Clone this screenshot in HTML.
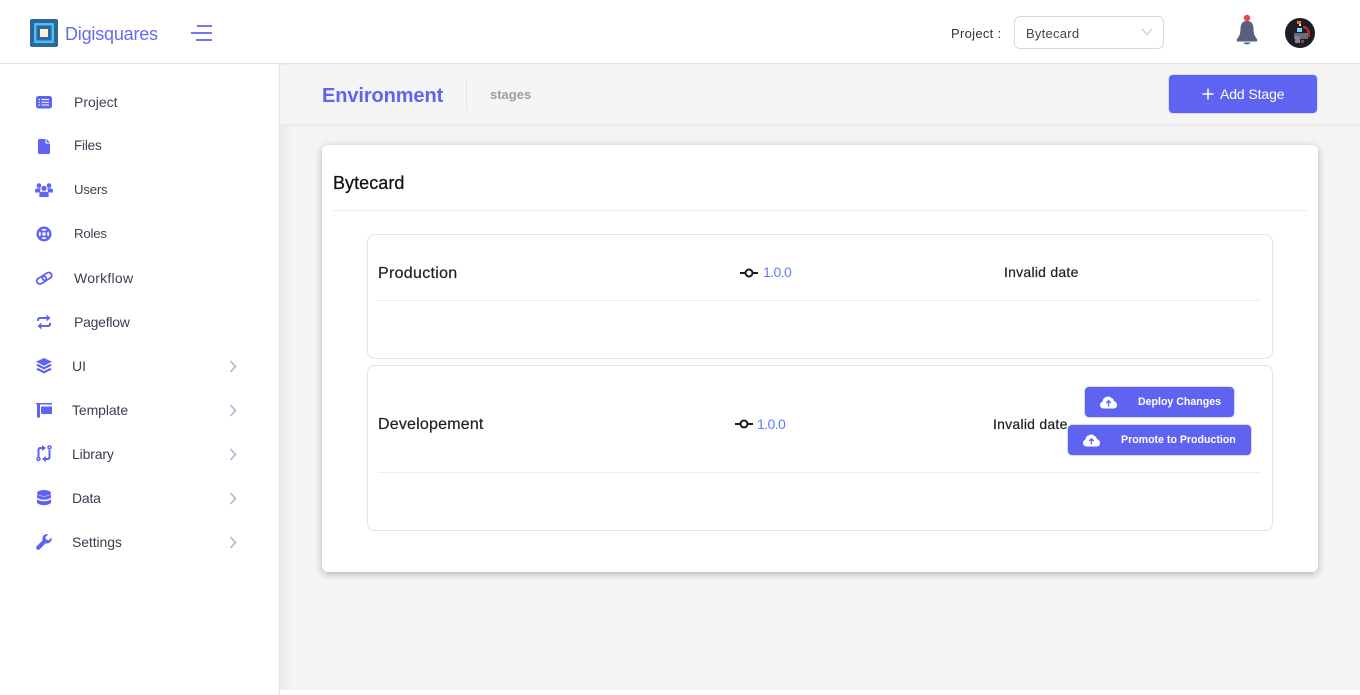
<!DOCTYPE html>
<html><head><meta charset="utf-8"><style>
html,body{margin:0;padding:0}
body{width:1360px;height:695px;overflow:hidden;background:#fff;position:relative;font-family:"Liberation Sans",sans-serif;color:#272b41}
div,span,svg{position:absolute;box-sizing:border-box}
.t{white-space:nowrap;line-height:20px;height:20px}
.m{font-size:14px;color:#3b3f50;left:74px}
.m2{left:72px}
.b{background:#5f63f2;border:1px solid #d9dbf5;border-radius:5px}
.w{color:#fff;font-weight:bold;font-size:10.600px;letter-spacing:0}
</style></head><body>
<div style="left:280px;top:64px;width:1080px;height:626px;background:#f4f4f4"></div>
<div style="left:280px;top:64px;width:12px;height:626px;background:linear-gradient(90deg,#e9e9e9,#f4f4f4)"></div>
<div style="left:280px;top:65px;width:1080px;height:60px;background:#f5f5f6;border-bottom:1px solid #e9e9e9;box-shadow:0 1px 2px rgba(0,0,0,.02)"></div>
<div style="left:0;top:64px;width:280px;height:631px;background:#fff;border-right:1px solid #e2e2e2"></div>
<div style="left:0;top:0;width:1360px;height:64px;background:#fff;border-bottom:1px solid #e4e4e4"></div>

<svg style="left:30px;top:19px" width="28" height="28"><rect width="28" height="28" rx="2" fill="#2f679b"/><rect x="4" y="4" width="20" height="20" fill="#4cbdf6"/><rect x="6.500" y="6.500" width="15" height="15" fill="#2f679b"/><rect x="10" y="10" width="8" height="8" fill="#f8efdf"/></svg>
<div class="t" style="left:65px;top:24px;font-size:18px;color:#666bf2;letter-spacing:-.2px">Digisquares</div>
<svg style="left:191px;top:25px" width="21" height="16"><path d="M6.500 1H20.500M.5 8H20.500M5.500 15H20.500" stroke="#5f63f2" stroke-width="1.700" stroke-linecap="round"/></svg>

<div class="t" style="left:951px;top:24px;font-size:13px;color:#333;letter-spacing:.3px">Project :</div>
<div style="left:1014px;top:16px;width:150px;height:33px;border:1px solid #d9d9d9;border-radius:6px;background:#fff"></div>
<div class="t" style="left:1026px;top:24px;font-size:13px;color:#444;letter-spacing:.25px">Bytecard</div>
<svg style="left:1141px;top:28px" width="12" height="8"><path d="M1 1L6 6.500L11 1" fill="none" stroke="#c2c2c2" stroke-width="1"/></svg>
<svg style="left:1236px;top:14px" width="22" height="32"><circle cx="11" cy="4" r="3.200" fill="#ee4451"/><path d="M11 7C6 7 4.500 10.500 4.500 15C4.500 20 3 23 .8 25V27.500H21.200V25C19 23 17.500 20 17.500 15C17.500 10.500 16 7 11 7Z" fill="#5a5f7d"/><path d="M7.500 28.500H14.500C14 31 8 31 7.500 28.500Z" fill="#5a5f7d"/></svg>
<svg style="left:1285px;top:18px" width="30" height="30"><circle cx="15" cy="15" r="15" fill="#1d1f27"/><rect x="12" y="3" width="4" height="3" fill="#e8742c"/><rect x="14" y="6" width="2" height="2" fill="#f4e2c8"/><path d="M18 8H21L25 13V19H22V12L18 10Z" fill="#c12a22"/><rect x="12" y="10" width="5" height="4" fill="#78d6e6"/><rect x="9" y="15" width="14" height="6" fill="#6a6d75"/><rect x="10" y="18" width="5" height="7" fill="#7a8a90"/><rect x="16" y="22" width="3" height="3" fill="#a33"/></svg>

<!-- sidebar -->
<svg style="left:36px;top:96px" width="16" height="13"><rect width="16" height="12.500" rx="2.500" fill="#5f63f2"/><path d="M5.500 3.500H13M5.500 6.250H13M5.500 9H13M2.500 3.500H4M2.500 6.250H4M2.500 9H4" stroke="#fff" stroke-width="1.100"/></svg>
<div class="t m" style="top:92px">Project</div>
<svg style="left:38px;top:139px" width="12" height="15"><path d="M1.500 0H7.500V4.500H12V13.500Q12 15 10.500 15H1.500Q0 15 0 13.500V1.500Q0 0 1.500 0ZM8.500 0L12 3.500H8.500Z" fill="#5f63f2"/></svg>
<div class="t m" style="top:136px;letter-spacing:-.2px;font-size:13.500px">Files</div>
<svg style="left:35px;top:183px" width="18" height="14"><circle cx="4" cy="2.600" r="2.300" fill="#5f63f2"/><circle cx="14" cy="2.600" r="2.300" fill="#5f63f2"/><circle cx="9" cy="5.300" r="2.600" fill="#5f63f2"/><path d="M0 8.500Q0 5.300 2.500 5.300H5.500L5 9.500H0ZM18 8.500Q18 5.300 15.500 5.300H12.500L13 9.500H18ZM4.300 11.500Q4.300 8.800 7 8.800H11Q13.700 8.800 13.700 11.500V14H4.300Z" fill="#5f63f2"/></svg>
<div class="t m" style="top:180px;letter-spacing:-.2px;font-size:13.200px">Users</div>
<svg style="left:36px;top:226px" width="16" height="16"><circle cx="8" cy="8" r="6.300" fill="none" stroke="#5f63f2" stroke-width="2.400"/><circle cx="8" cy="8" r="2.600" fill="none" stroke="#5f63f2" stroke-width="1.600"/><path d="M3.500 3.500L6 6M12.500 3.500L10 6M3.500 12.500L6 10M12.500 12.500L10 10" stroke="#5f63f2" stroke-width="2.400"/></svg>
<div class="t m" style="top:224px;letter-spacing:-.2px;font-size:13.200px">Roles</div>
<svg style="left:36px;top:270px" width="17" height="16"><g fill="none" stroke="#5f63f2" stroke-width="1.800"><rect x="-5" y="-3" width="10" height="6" rx="3" transform="translate(5.500 10) rotate(-30)"/><rect x="-5" y="-3" width="10" height="6" rx="3" transform="translate(11 6.500) rotate(-30)"/></g></svg>
<div class="t m" style="top:268px;letter-spacing:.25px">Workflow</div>
<svg style="left:37px;top:314px" width="14" height="16"><path d="M1 7V6Q1 4 3 4H12M13 9V10Q13 12 11 12H2" fill="none" stroke="#5f63f2" stroke-width="2"/><path d="M9.500 .5L13.500 4L9.500 7.500ZM4.500 8.500L.5 12L4.500 15.500Z" fill="#5f63f2"/></svg>
<div class="t m" style="top:312px;letter-spacing:-.25px">Pageflow</div>
<svg style="left:36px;top:358px" width="16" height="16"><path d="M8 0L16 3.800L8 7.800L0 3.800Z" fill="#5f63f2"/><path d="M2 6L8 9L14 6L16 7.500L8 11.500L0 7.500Z" fill="#5f63f2"/><path d="M2 10L8 13L14 10L16 11.500L8 15.500L0 11.500Z" fill="#5f63f2"/></svg>
<div class="t m m2" style="top:356px">UI</div>
<svg style="left:36px;top:403px" width="16" height="15"><path d="M0 0H16V1.500H4V14.500H1V1.500H0Z" fill="#5f63f2"/><path d="M5 3.500H16V11H6.500Q5 11 5 9.500Z" fill="#5f63f2"/></svg>
<div class="t m m2" style="top:400px;letter-spacing:-.1px">Template</div>
<svg style="left:36px;top:445px" width="16" height="17"><g fill="none" stroke="#5f63f2" stroke-width="1.500"><circle cx="2.500" cy="14" r="1.500"/><circle cx="13.500" cy="2.500" r="1.500"/></g><path d="M2.500 12V5Q2.500 3 4.500 3H7M13.500 5V12Q13.500 14 11.500 14H9" fill="none" stroke="#5f63f2" stroke-width="2"/><path d="M6 0L10 3L6 6ZM10 11L6 14L10 17Z" fill="#5f63f2"/></svg>
<div class="t m m2" style="top:444px;letter-spacing:-.15px">Library</div>
<svg style="left:37px;top:490px" width="14" height="16"><ellipse cx="7" cy="3" rx="7" ry="3" fill="#5f63f2"/><path d="M0 4.500Q7 8.500 14 4.500V8Q7 11.500 0 8ZM0 9.500Q7 13 14 9.500V13Q7 17.500 0 13Z" fill="#5f63f2"/></svg>
<div class="t m m2" style="top:488px;letter-spacing:-.2px">Data</div>
<svg style="left:36px;top:534px" width="16" height="16"><path d="M15.500 3.500L12.800 6.200L10 5.500L9.500 3L12.300.3C10 -.5 7 .8 6.500 3.500Q6.200 5 6.700 6.300L.7 12.300Q-.5 13.800.7 15.200Q2.200 16.500 3.700 15.200L9.700 9.300C12.800 10.200 16.500 7.500 15.500 3.500Z" fill="#5f63f2"/></svg>
<div class="t m m2" style="top:532px;letter-spacing:-.1px">Settings</div>
<svg style="left:229px;top:360px" width="8" height="13"><path d="M1.500 1L6.500 6.500L1.500 12" fill="none" stroke="#adb4d2" stroke-width="1.500"/></svg>
<svg style="left:229px;top:404px" width="8" height="13"><path d="M1.500 1L6.500 6.500L1.500 12" fill="none" stroke="#adb4d2" stroke-width="1.500"/></svg>
<svg style="left:229px;top:448px" width="8" height="13"><path d="M1.500 1L6.500 6.500L1.500 12" fill="none" stroke="#adb4d2" stroke-width="1.500"/></svg>
<svg style="left:229px;top:492px" width="8" height="13"><path d="M1.500 1L6.500 6.500L1.500 12" fill="none" stroke="#adb4d2" stroke-width="1.500"/></svg>
<svg style="left:229px;top:536px" width="8" height="13"><path d="M1.500 1L6.500 6.500L1.500 12" fill="none" stroke="#adb4d2" stroke-width="1.500"/></svg>

<!-- subheader -->
<div class="t" style="left:322px;top:86px;font-size:20px;font-weight:bold;color:#5f63f2;letter-spacing:-.1px">Environment</div>
<div style="left:466px;top:78px;width:1px;height:32px;background:#e3e4ee"></div>
<div class="t" style="left:490px;top:85px;font-size:13px;font-weight:bold;color:#9d9d9d">stages</div>
<div class="b" style="left:1168px;top:74px;width:150px;height:40px"></div>
<svg style="left:1202px;top:88px" width="12" height="12"><path d="M6 .5V11.500M.5 6H11.500" stroke="#fff" stroke-width="1.500"/></svg>
<div class="t" style="left:1220px;top:84px;font-size:14px;color:#fff;letter-spacing:-.1px">Add Stage</div>

<!-- card -->
<div style="left:322px;top:145px;width:996px;height:427px;background:#fff;border-radius:6px;box-shadow:0 2px 8px rgba(0,0,0,.28)"></div>
<div class="t" style="left:333px;top:173px;font-size:18px;color:#111;-webkit-text-stroke:.25px #111;letter-spacing:.05px">Bytecard</div>
<div style="left:333px;top:210px;width:974px;height:1px;background:#ececec"></div>

<div style="left:367px;top:234px;width:906px;height:125px;border:1px solid #e3e3e3;border-radius:8px"></div>
<div class="t" style="left:378px;top:264px;font-size:16px;color:#222;letter-spacing:.3px;-webkit-text-stroke:.2px #222">Production</div>
<svg style="left:740px;top:267px" width="18" height="12"><path d="M0 6H18" stroke="#1b1b1b" stroke-width="2"/><circle cx="9" cy="6" r="3.500" fill="#fff" stroke="#1b1b1b" stroke-width="2"/></svg>
<div class="t" style="left:763px;top:262px;font-size:14px;color:#5f7cf5;letter-spacing:-.6px">1.0.0</div>
<div class="t" style="left:1004px;top:262px;font-size:14px;color:#222;letter-spacing:.25px;-webkit-text-stroke:.2px #222">Invalid date</div>
<div style="left:378px;top:300px;width:883px;height:1px;background:#eee"></div>

<div style="left:367px;top:365px;width:906px;height:166px;border:1px solid #e3e3e3;border-radius:8px"></div>
<div class="t" style="left:378px;top:415px;font-size:16px;color:#222;letter-spacing:.2px;-webkit-text-stroke:.2px #222">Developement</div>
<svg style="left:735px;top:418px" width="18" height="12"><path d="M0 6H18" stroke="#1b1b1b" stroke-width="2"/><circle cx="9" cy="6" r="3.500" fill="#fff" stroke="#1b1b1b" stroke-width="2"/></svg>
<div class="t" style="left:757px;top:414px;font-size:14px;color:#5f7cf5;letter-spacing:-.6px">1.0.0</div>
<div class="t" style="left:993px;top:414px;font-size:14px;color:#222;letter-spacing:.25px;-webkit-text-stroke:.2px #222">Invalid date</div>
<div style="left:378px;top:472px;width:883px;height:1px;background:#eee"></div>

<div class="b" style="left:1084px;top:386px;width:151px;height:32px"></div>
<svg style="left:1100px;top:395px" width="17" height="14"><path d="M4 13.500Q0 13.500 0 10Q0 7.500 2.500 6.500Q3 2.500 6.500 2Q9.500 .5 12 3.500Q13.500 3.500 13.800 6Q17 7 17 10Q17 13.500 13.500 13.500Z" fill="#fff"/><path d="M8.500 11.500V6M6.300 8L8.500 5.800L10.700 8" fill="none" stroke="#5f63f2" stroke-width="1.300"/></svg>
<div class="t w" style="left:1138px;top:392px">Deploy Changes</div>
<div class="b" style="left:1067px;top:424px;width:185px;height:32px"></div>
<svg style="left:1083px;top:433px" width="17" height="14"><path d="M4 13.500Q0 13.500 0 10Q0 7.500 2.500 6.500Q3 2.500 6.500 2Q9.500 .5 12 3.500Q13.500 3.500 13.800 6Q17 7 17 10Q17 13.500 13.500 13.500Z" fill="#fff"/><path d="M8.500 11.500V6M6.300 8L8.500 5.800L10.700 8" fill="none" stroke="#5f63f2" stroke-width="1.300"/></svg>
<div class="t w" style="left:1121px;top:430px">Promote to Production</div>
</body></html>
